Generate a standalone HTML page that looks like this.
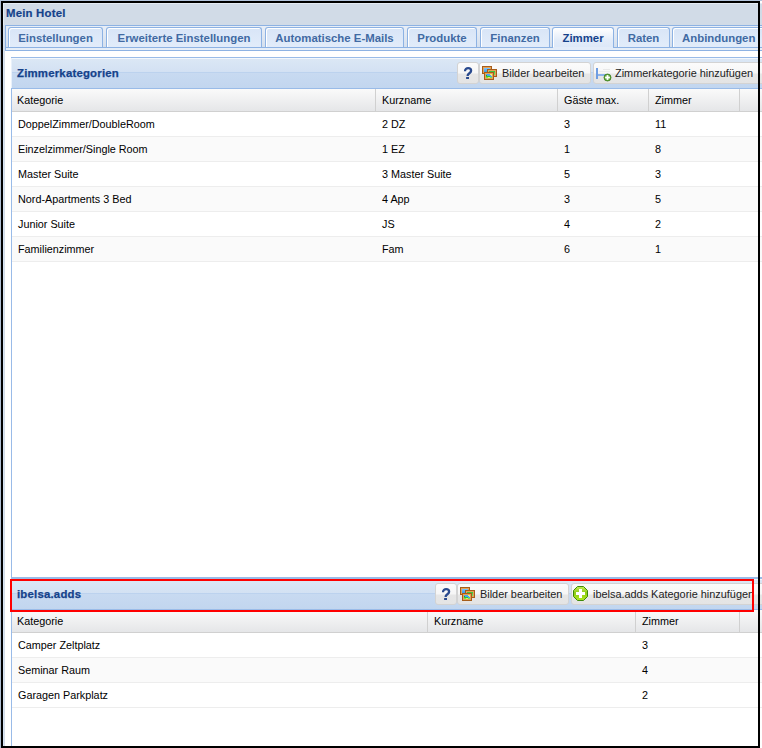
<!DOCTYPE html>
<html><head><meta charset="utf-8">
<style>
*{box-sizing:border-box;margin:0;padding:0}
html,body{width:762px;height:748px;overflow:hidden;background:#fff;font-family:"Liberation Sans",sans-serif}
.a{position:absolute}
#outside{left:0;top:0;width:1px;height:748px;background:#aebdd2}
#topbar{left:3px;top:3px;width:759px;height:22px;background:#d1dbe7;border-top:1px solid #e4ebf3;border-left:1px solid #e4ebf3}
#title{left:6px;top:5px;font-weight:bold;font-size:11.4px;letter-spacing:0.2px;-webkit-text-stroke:0.2px #15428b;color:#15428b;line-height:16px}
#leftcol{left:3px;top:25px;width:2px;height:723px;background:linear-gradient(90deg,#d6e2f1 1px,#d2dce8 1px)}
#strip{left:5px;top:25px;width:757px;height:26px;border-top:1px solid #8db2e3;border-left:1px solid #8db2e3;border-bottom:1px solid #8db2e3;background:linear-gradient(#e8eef7,#d5e0ee 21px,#e6eef8 22px)}
#stripline{left:5px;top:47px;width:757px;height:1px;background:#8db2e3}
.tab{top:27px;height:20px;border:1px solid #8db2e3;border-bottom:none;border-radius:3px 3px 0 0;background:linear-gradient(#d8e5f7,#e2ecfa);box-shadow:inset 1px 1px 0 #fff;font-weight:bold;font-size:11.4px;color:#416aa3;text-align:center;line-height:18px;padding-top:1px;white-space:nowrap;overflow:hidden}
.tab.act{height:21px;background:linear-gradient(#ffffff,#e3ecf9 60%,#dce8f8);color:#15428b}
.panel{left:11px;width:751px;border-left:1px solid #99bbe8}
.phdr{left:11px;width:751px;height:32px;border-top:1px solid #99bbe8;border-bottom:1px solid #99bbe8;background:linear-gradient(#f3f8fd 0,#f3f8fd 1px,#dbe7f5 1px,#d3e1f3 14px,#bcd2ee 14px,#bcd2ee 15px,#c8daf1 15px,#c2d6ef 100%);box-shadow:inset 1px 0 0 #e9f1fb}
.ptitle{left:6px;top:8px;font-weight:bold;font-size:11.4px;letter-spacing:0.2px;-webkit-text-stroke:0.25px #15428b;color:#15428b;line-height:14px}
.btn{top:4px;height:22px;border:1px solid #d3d3d3;border-radius:3px;background:linear-gradient(#fbfbfb 0,#f6f6f6 10px,#e6e6e6 11px,#e4e4e4 100%);font-size:10.9px;color:#222;line-height:20px;white-space:nowrap;overflow:hidden}
.ghdr{left:12px;width:750px;height:23px;border-bottom:1px solid #d0d0d0;background:linear-gradient(#fafafa,#e5e6e8)}
.col{top:0;height:22px;border-left:1px solid #d0d0d0;font-size:10.8px;color:#000;line-height:22px;padding-left:6px;white-space:nowrap}
.row{left:12px;width:750px;height:25px;border-bottom:1px solid #ededed;background:#fff}
.row.alt{background:#fafafa}
.cell{top:0;font-size:10.8px;color:#000;line-height:24px;white-space:nowrap}
#black{left:1px;top:1px;width:759px;height:747px;border:2px solid #000}
#red{left:10px;top:579px;width:744px;height:33px;border:2px solid #f00}
</style></head><body>
<div class="a" id="outside"></div><div class="a" style="left:0;top:0;width:762px;height:1px;background:#b3c4dc"></div>
<div class="a" id="topbar"></div>
<div class="a" id="title">Mein Hotel</div>
<div class="a" id="leftcol"></div>
<div class="a" id="strip"></div>
<div class="a" id="stripline"></div>
<div class="a tab" style="left:8px;width:95px">Einstellungen</div>
<div class="a tab" style="left:106px;width:156px">Erweiterte Einstellungen</div>
<div class="a tab" style="left:265px;width:139px">Automatische E-Mails</div>
<div class="a tab" style="left:407px;width:70px">Produkte</div>
<div class="a tab" style="left:480px;width:70px">Finanzen</div>
<div class="a tab act" style="left:552px;width:62px">Zimmer</div>
<div class="a" style="left:553px;top:47px;width:60px;height:3px;background:#e3ecf9"></div>
<div class="a tab" style="left:617px;width:53px">Raten</div>
<div class="a tab" style="left:672px;width:95px;text-align:left;padding-left:9px">Anbindungen</div>

<!-- top panel -->
<div class="a panel" style="top:57px;height:521px;border-bottom:1px solid #99bbe8"></div>
<div class="a phdr" style="top:57px">
  <div class="a ptitle">Zimmerkategorien</div>
  <div class="a btn" style="left:446px;width:22px"><svg class="a" style="left:5px;top:4px" width="10" height="13" viewBox="0 0 10 13"><path d="M2,4.2 C2,1.9 3.6,1.15 5.1,1.15 C7,1.15 8.1,2.2 8.1,3.7 C8.1,5.1 7.1,5.8 6.1,6.5 C5.1,7.2 4.6,7.7 4.6,8.9" fill="none" stroke="#2a4a8e" stroke-width="2.3"/><rect x="3.1" y="10" width="2.9" height="2" fill="#2a4a8e"/></svg></div>
  <div class="a btn" style="left:468px;width:112px;padding-left:22px"><svg class="a" style="left:2px;top:3px" width="15" height="14" shape-rendering="crispEdges">
<defs><linearGradient id="gb" x1="0" y1="0" x2="0" y2="1"><stop offset="0" stop-color="#78c4ff"/><stop offset="1" stop-color="#3d98e8"/></linearGradient>
<linearGradient id="gg" x1="0" y1="0" x2="0" y2="1"><stop offset="0" stop-color="#38c038"/><stop offset="1" stop-color="#70e868"/></linearGradient></defs>
<rect x="0" y="0" width="10" height="8" fill="#a65d1a"/><rect x="1" y="1" width="8" height="6" fill="#e5a257"/><rect x="2" y="2" width="6" height="4" fill="url(#gb)"/>
<rect x="5" y="3" width="10" height="8" fill="#a65d1a"/><rect x="6" y="4" width="8" height="6" fill="#e5a257"/><rect x="7" y="5" width="6" height="4" fill="url(#gg)"/>
<rect x="2" y="6" width="10" height="8" fill="#a65d1a"/><rect x="3" y="7" width="8" height="6" fill="#e5a257"/>
<rect x="4" y="8" width="6" height="4" fill="#48a8f0"/><rect x="8" y="8" width="2" height="1" fill="#f8f070"/><rect x="9" y="9" width="1" height="1" fill="#e8f080"/><rect x="4" y="9" width="1" height="1" fill="#20b020"/><rect x="4" y="10" width="4" height="1" fill="#38c030"/><rect x="4" y="11" width="6" height="1" fill="#70e850"/><rect x="6" y="11" width="2" height="1" fill="#d8f060"/>
</svg><span class="a" style="left:22px;top:0">Bilder bearbeiten</span></div>
  <div class="a btn" style="left:582px;width:180px;padding-left:22px"><svg class="a" style="left:1px;top:3px" width="17" height="17">
<g shape-rendering="crispEdges"><rect x="8" y="3" width="7" height="1" fill="#e8e8e8"/><rect x="4" y="5" width="11" height="1" fill="#ededed"/>
<rect x="1" y="2" width="2" height="11" fill="#6f9de2"/><rect x="3" y="8" width="11" height="2" fill="#8bb2ea"/></g>
<circle cx="12.5" cy="11.5" r="3.5" fill="#62a83a" stroke="#3a7d1c" stroke-width="0.8"/>
<rect x="11.6" y="9.1" width="1.8" height="4.8" fill="#fff"/><rect x="10.1" y="10.6" width="4.8" height="1.8" fill="#fff"/>
</svg><span class="a" style="left:21px;top:0">Zimmerkategorie hinzufügen</span></div>
</div>
<div class="a ghdr" style="top:89px">
  <div class="a col" style="left:0;width:363px;border-left:none;padding-left:5px">Kategorie</div>
  <div class="a col" style="left:363px;width:182px">Kurzname</div>
  <div class="a col" style="left:545px;width:91px">Gäste max.</div>
  <div class="a col" style="left:636px;width:91px">Zimmer</div>
  <div class="a col" style="left:727px;width:30px"></div>
</div>
<div class="a row" style="top:112px"><div class="a cell" style="left:6px">DoppelZimmer/DoubleRoom</div><div class="a cell" style="left:370px">2 DZ</div><div class="a cell" style="left:552px">3</div><div class="a cell" style="left:643px">11</div></div>
<div class="a row alt" style="top:137px"><div class="a cell" style="left:6px">Einzelzimmer/Single Room</div><div class="a cell" style="left:370px">1 EZ</div><div class="a cell" style="left:552px">1</div><div class="a cell" style="left:643px">8</div></div>
<div class="a row" style="top:162px"><div class="a cell" style="left:6px">Master Suite</div><div class="a cell" style="left:370px">3 Master Suite</div><div class="a cell" style="left:552px">5</div><div class="a cell" style="left:643px">3</div></div>
<div class="a row alt" style="top:187px"><div class="a cell" style="left:6px">Nord-Apartments 3 Bed</div><div class="a cell" style="left:370px">4 App</div><div class="a cell" style="left:552px">3</div><div class="a cell" style="left:643px">5</div></div>
<div class="a row" style="top:212px"><div class="a cell" style="left:6px">Junior Suite</div><div class="a cell" style="left:370px">JS</div><div class="a cell" style="left:552px">4</div><div class="a cell" style="left:643px">2</div></div>
<div class="a row alt" style="top:237px"><div class="a cell" style="left:6px">Familienzimmer</div><div class="a cell" style="left:370px">Fam</div><div class="a cell" style="left:552px">6</div><div class="a cell" style="left:643px">1</div></div>

<!-- bottom panel -->
<div class="a panel" style="top:578px;height:170px"></div>
<div class="a phdr" style="top:578px">
  <div class="a ptitle">ibelsa.adds</div>
  <div class="a btn" style="left:424px;width:22px"><svg class="a" style="left:5px;top:4px" width="10" height="13" viewBox="0 0 10 13"><path d="M2,4.2 C2,1.9 3.6,1.15 5.1,1.15 C7,1.15 8.1,2.2 8.1,3.7 C8.1,5.1 7.1,5.8 6.1,6.5 C5.1,7.2 4.6,7.7 4.6,8.9" fill="none" stroke="#2a4a8e" stroke-width="2.3"/><rect x="3.1" y="10" width="2.9" height="2" fill="#2a4a8e"/></svg></div>
  <div class="a btn" style="left:446px;width:112px;padding-left:22px"><svg class="a" style="left:2px;top:3px" width="15" height="14" shape-rendering="crispEdges">
<defs><linearGradient id="gb2" x1="0" y1="0" x2="0" y2="1"><stop offset="0" stop-color="#78c4ff"/><stop offset="1" stop-color="#3d98e8"/></linearGradient>
<linearGradient id="gg2" x1="0" y1="0" x2="0" y2="1"><stop offset="0" stop-color="#38c038"/><stop offset="1" stop-color="#70e868"/></linearGradient></defs>
<rect x="0" y="0" width="10" height="8" fill="#a65d1a"/><rect x="1" y="1" width="8" height="6" fill="#e5a257"/><rect x="2" y="2" width="6" height="4" fill="url(#gb2)"/>
<rect x="5" y="3" width="10" height="8" fill="#a65d1a"/><rect x="6" y="4" width="8" height="6" fill="#e5a257"/><rect x="7" y="5" width="6" height="4" fill="url(#gg2)"/>
<rect x="2" y="6" width="10" height="8" fill="#a65d1a"/><rect x="3" y="7" width="8" height="6" fill="#e5a257"/>
<rect x="4" y="8" width="6" height="4" fill="#48a8f0"/><rect x="8" y="8" width="2" height="1" fill="#f8f070"/><rect x="9" y="9" width="1" height="1" fill="#e8f080"/><rect x="4" y="9" width="1" height="1" fill="#20b020"/><rect x="4" y="10" width="4" height="1" fill="#38c030"/><rect x="4" y="11" width="6" height="1" fill="#70e850"/><rect x="6" y="11" width="2" height="1" fill="#d8f060"/>
</svg><span class="a" style="left:22px;top:0">Bilder bearbeiten</span></div>
  <div class="a btn" style="left:560px;width:200px;padding-left:22px"><svg class="a" style="left:1px;top:2px" width="15" height="15">
<defs><linearGradient id="go" x1="0" y1="0" x2="0" y2="1"><stop offset="0" stop-color="#c4ec58"/><stop offset="0.45" stop-color="#8fcc14"/><stop offset="1" stop-color="#aee820"/></linearGradient></defs>
<path d="M4.5,0.5 H10.5 L14.5,4.5 V10.5 L10.5,14.5 H4.5 L0.5,10.5 V4.5 Z" fill="url(#go)" stroke="#3e8a0a" stroke-width="1"/>
<g shape-rendering="crispEdges"><rect x="6" y="3" width="3" height="9" fill="#fff"/><rect x="3" y="6" width="9" height="3" fill="#fff"/></g>
</svg><span class="a" style="left:21px;top:0">ibelsa.adds Kategorie hinzufügen</span></div>
</div>
<div class="a ghdr" style="top:610px">
  <div class="a col" style="left:0;width:415px;border-left:none;padding-left:5px">Kategorie</div>
  <div class="a col" style="left:415px;width:208px">Kurzname</div>
  <div class="a col" style="left:623px;width:104px">Zimmer</div>
  <div class="a col" style="left:727px;width:30px"></div>
</div>
<div class="a row" style="top:633px"><div class="a cell" style="left:6px">Camper Zeltplatz</div><div class="a cell" style="left:630px">3</div></div>
<div class="a row alt" style="top:658px"><div class="a cell" style="left:6px">Seminar Raum</div><div class="a cell" style="left:630px">4</div></div>
<div class="a row" style="top:683px"><div class="a cell" style="left:6px">Garagen Parkplatz</div><div class="a cell" style="left:630px">2</div></div>

<div class="a" id="red"></div>
<div class="a" id="black"></div>
</body></html>
